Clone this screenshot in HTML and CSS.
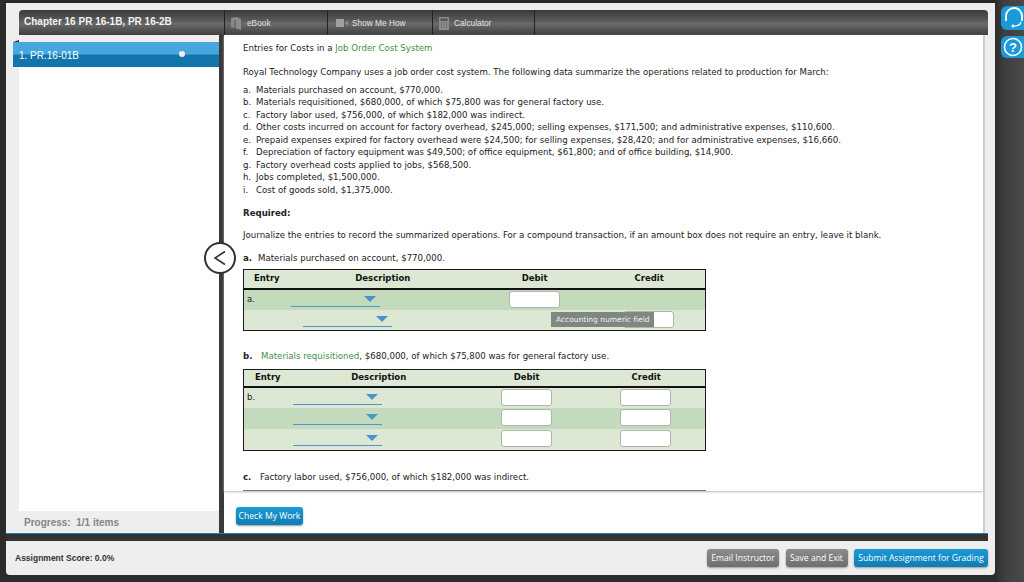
FILE: index.html
```html
<!DOCTYPE html>
<html lang="en">
<head>
<meta charset="utf-8">
<title>Chapter 16 PR 16-1B, PR 16-2B</title>
<link rel="stylesheet" href="styles.css">
</head>
<body>
<div class="shell">
  <div class="window">
    <header class="titlebar">
      <h1 class="chapter">Chapter 16 PR 16-1B, PR 16-2B</h1>
      <nav class="tools">
        <a class="tool tool-book"><svg class="ico" width="10" height="13" viewBox="0 0 10 13"><path d="M0 1 L6 0 L10 2 V13 L4 11 L0 10 Z" fill="#8a8a8a"/><path d="M4 3 V11" stroke="#555" fill="none"/></svg>eBook</a>
        <a class="tool tool-show"><svg class="ico" width="12" height="8" viewBox="0 0 12 8"><rect width="8" height="8" fill="#a0a0a0"/><path d="M9 4 L12 1 V7 Z" fill="#8a8a8a"/></svg>Show Me How</a>
        <a class="tool tool-calc"><svg class="ico" width="10" height="13" viewBox="0 0 10 13"><rect width="10" height="13" fill="#8c8c8c"/><rect x="1.5" y="1.5" width="7" height="2.5" fill="#555"/><path d="M2 6h1M4.500 6h1M7 6h1M2 8h1M4.500 8h1M7 8h1M2 10.500h1M4.500 10.500h1M7 10.500h1" stroke="#555" fill="none"/></svg>Calculator</a>
      </nav>
    </header>
    <div class="main">
      <aside class="sidebar">
        <div class="item"><span>1. PR.16-01B</span><i class="dot"></i></div>
        <div class="list"></div>
        <div class="progress">Progress:&nbsp; 1/1 items</div>
      </aside>
      <section class="content">
        <div class="scroll">
          <p class="title">Entries for Costs in a <span class="green">Job Order Cost System</span></p>
          <p class="intro">Royal Technology Company uses a job order cost system. The following data summarize the operations related to production for March:</p>
          <ol class="facts">
            <li><b>a.</b>Materials purchased on account, $770,000.</li>
            <li><b>b.</b>Materials requisitioned, $680,000, of which $75,800 was for general factory use.</li>
            <li><b>c.</b>Factory labor used, $756,000, of which $182,000 was indirect.</li>
            <li><b>d.</b>Other costs incurred on account for factory overhead, $245,000; selling expenses, $171,500; and administrative expenses, $110,600.</li>
            <li><b>e.</b>Prepaid expenses expired for factory overhead were $24,500; for selling expenses, $28,420; and for administrative expenses, $16,660.</li>
            <li><b>f.</b>Depreciation of factory equipment was $49,500; of office equipment, $61,800; and of office building, $14,900.</li>
            <li><b>g.</b>Factory overhead costs applied to jobs, $568,500.</li>
            <li><b>h.</b>Jobs completed, $1,500,000.</li>
            <li><b>i.</b>Cost of goods sold, $1,375,000.</li>
          </ol>
          <p class="required">Required:</p>
          <p class="journal">Journalize the entries to record the summarized operations. For a compound transaction, if an amount box does not require an entry, leave it blank.</p>
          <p class="part part-a"><b>a.</b>Materials purchased on account, $770,000.</p>
          <table class="entry entry-a">
            <colgroup><col class="ca1"><col class="ca2"><col class="ca3"><col class="ca4"></colgroup>
            <thead><tr><th>Entry</th><th>Description</th><th>Debit</th><th>Credit</th></tr></thead>
            <tbody>
              <tr class="alt"><td class="lbl">a.</td><td><div class="drop"></div></td><td><div class="field"></div></td><td></td></tr>
              <tr><td></td><td><div class="drop drop-in"></div></td><td></td><td class="tipcell"><div class="field"></div><div class="tip">Accounting numeric field</div></td></tr>
            </tbody>
          </table>
          <p class="part part-b"><b>b.</b><span class="green">Materials requisitioned</span>, $680,000, of which $75,800 was for general factory use.</p>
          <table class="entry entry-b">
            <colgroup><col class="cb1"><col class="cb2"><col class="cb3"><col class="cb4"></colgroup>
            <thead><tr><th>Entry</th><th>Description</th><th>Debit</th><th>Credit</th></tr></thead>
            <tbody>
              <tr><td class="lbl">b.</td><td><div class="drop"></div></td><td><div class="field"></div></td><td><div class="field"></div></td></tr>
              <tr class="alt"><td></td><td><div class="drop"></div></td><td><div class="field"></div></td><td><div class="field"></div></td></tr>
              <tr><td></td><td><div class="drop"></div></td><td><div class="field"></div></td><td><div class="field"></div></td></tr>
            </tbody>
          </table>
          <p class="part part-c"><b>c.</b>Factory labor used, $756,000, of which $182,000 was indirect.</p>
          <div class="nexttable"></div>
        </div>
        <div class="actions"><button class="btn btn-blue">Check My Work</button></div>
        <button class="back" aria-label="Back"><svg width="14" height="16" viewBox="0 0 14 16"><path d="M12 1.500 L2 8 L12 14.500" fill="none" stroke="#333" stroke-width="1.600"/></svg></button>
      </section>
    </div>
    <div class="statusline"></div>
    <footer class="footer">
      <span class="score">Assignment Score: 0.0%</span>
      <div class="footer-btns">
        <button class="btn btn-gray">Email Instructor</button>
        <button class="btn btn-gray">Save and Exit</button>
        <button class="btn btn-blue btn-submit">Submit Assignment for Grading</button>
      </div>
    </footer>
  </div>
  <div class="rail">
    <div class="railbtn"><svg width="23" height="24" viewBox="0 0 23 24"><path d="M5 15 V10 A8 8 0 0 1 21 10 V15" fill="none" stroke="#fff" stroke-width="1.800"/><path d="M20 16 Q19 20 13 20" fill="none" stroke="#fff" stroke-width="1.200"/><circle cx="12" cy="20" r="1.500" fill="#fff"/></svg></div>
    <div class="railbtn railbtn-q"><svg width="23" height="22" viewBox="0 0 23 22"><circle cx="12" cy="11" r="8.500" fill="none" stroke="#fff" stroke-width="1.600"/><text x="12" y="15.500" text-anchor="middle" class="qmark">?</text></svg></div>
  </div>
</div>
</body>
</html>
```
FILE: styles.css
```css
* { box-sizing: border-box; }
html, body { margin: 0; height: 582px; overflow: hidden; }
body { background: #2b2b2b; font-family: "Liberation Sans", Arial, sans-serif; }
p, h1, ol { margin: 0; padding: 0; }
.shell { display: flex; height: 582px; padding-top: 3px; }
.window {
  width: 989px; height: 572px; margin-left: 6px; padding-top: 7px;
  background: #eeeeee; display: flex; flex-direction: column;
  border-bottom-left-radius: 4px; border-bottom-right-radius: 4px;
}
.titlebar {
  height: 25px; margin: 0 7px 0 13px; display: flex; flex: none;
  background: linear-gradient(#3a3a3a 0, #5c5c5c 45%, #6a6a6a 55%, #3f3f3f 100%);
  border-radius: 4px 4px 0 0;
}
.chapter { width: 205px; font-size: 10px; font-weight: bold; color: #f2f2f2; padding: 6px 0 0 5px; line-height: 12px; white-space: nowrap; }
.tools { display: flex; }
.tool {
  display: flex; align-items: center; height: 100%; color: #e4e4e4; font-size: 8.3px;
  border-left: 1px solid #222; padding-top: 1px;
}
.tool-book { width: 103px; padding-left: 6px; gap: 6px; }
.tool-show { width: 105px; padding-left: 8px; gap: 4px; }
.tool-calc { width: 102px; padding-left: 6px; gap: 5px; border-right: 0; }
.tools::after { content: ""; border-left: 1px solid #222; }
.ico { flex: none; }

.main { display: flex; height: 498px; flex: none; }
.sidebar { width: 213px; padding: 7px 0 0 7px; display: flex; flex-direction: column; flex: none; }
.item {
  height: 25px; width: 206px; flex: none; display: flex; align-items: center; justify-content: space-between;
  background: linear-gradient(#45a7dd 0, #45a7dd 48%, #1276ac 52%, #1276ac 100%);
  color: #fff; font-size: 10px; padding: 1px 34px 0 6px; position: relative;
}
.item::before { content: ""; position: absolute; left: 0; top: -2px; border-left: 6px solid transparent; border-bottom: 2px solid #333; }
.dot { width: 6px; height: 6px; border-radius: 50%; background: #eee; margin-top: -3px; }
.list { height: 444px; width: 200px; margin-left: 6px; background: #fff; flex: none; }
.progress { font-size: 10px; font-weight: bold; color: #858585; margin: 6px 0 0 11px; line-height: 12px; white-space: nowrap; }

.content {
  width: 766px; flex: none; position: relative; background: #fff;
  border-left: 5px solid #3a3a3a; border-right: 2px solid #cfcfcf;
  display: flex; flex-direction: column; margin-right: 0;
}
.scroll { height: 456px; overflow: hidden; padding: 7px 0 0 19px; font-family: "DejaVu Sans", Verdana, sans-serif; font-size: 8.62px; color: #222; line-height: 12.5px; flex: none; box-shadow: 0 1px 2px #bbb; position: relative; }
.green { color: #3f9147; }
.intro { margin-top: 11px; }
.facts { list-style: none; margin-top: 5.500px; }
.facts b { display: inline-block; font-weight: normal; width: 13px; }
.facts li { height: 12.500px; white-space: nowrap; }
.required { font-weight: bold; margin-top: 10.500px; }
.journal { margin-top: 9.500px; white-space: nowrap; }
.part { white-space: nowrap; }
.part b { display: inline-block; }
.part-a { margin-top: 10.500px; }
.part-a b { width: 15px; }
.part-b { margin-top: 19px; }
.part-b b { width: 18px; }
.part-c { margin-top: 20.500px; }
.part-c b { width: 17px; }

.entry { border-collapse: collapse; table-layout: fixed; width: 463px; border: 1px solid #1c1c1c; background: #dde8d4; }
.part-a + .entry { margin-top: 5px; }
.part-b + .entry { margin-top: 6px; }
.entry th { height: 18px; padding: 0 0 1px 1px; font-weight: bold; color: #111; font-size: 8.500px; border-bottom: 2px solid #111; text-align: center; }
.entry-a th { height: 19px; }
.entry td { height: 21px; padding: 0; vertical-align: top; position: relative; }
.entry .alt { background: #c3dabc; }
.lbl { padding: 3px 0 0 3px !important; font-size: 8.500px; line-height: 12px; }
.ca1 { width: 45px; } .ca2 { width: 187px; } .ca3 { width: 116px; } .ca4 { width: 113px; }
.cb1 { width: 47px; } .cb2 { width: 175px; } .cb3 { width: 120px; } .cb4 { width: 119px; }
.drop { width: 89px; height: 17px; margin: 0 0 0 2px; border-bottom: 1.500px solid #4f93cf; position: relative; }
.drop::after { content: ""; position: absolute; right: 4px; top: 6px; border-left: 6px solid transparent; border-right: 6px solid transparent; border-top: 6px solid #4a94cd; }
.drop-in { margin-left: 14px; }
.field { width: 51px; height: 17px; margin: 1px auto 0; background: #fff; border: 1px solid #aeb5aa; border-radius: 3px; }
.tip { position: absolute; left: -41px; top: 2px; width: 103px; height: 15px; background: #80877f; color: #f2f2f2; font-size: 7.500px; line-height: 15px; text-align: center; white-space: nowrap; }
.nexttable { width: 463px; border-top: 1px solid #777; margin-top: 6px; height: 10px; }

.actions { height: 42px; padding: 16px 0 0 12px; flex: none; }
.btn { font-family: "Open Sans", sans-serif; font-size: 8.600px; color: #fff; border: 0; height: 18px; padding: 0; border-radius: 3px; box-shadow: 0 1px 2px #9a9a9a; white-space: nowrap; display: block; }
.btn-blue { background: linear-gradient(#1a9ad6, #0f7cb4); width: 67px; }
.btn-gray { background: linear-gradient(#8c8c8c, #6e6e6e); }
.footer-btns .btn-gray:nth-child(1) { width: 72px; }
.footer-btns .btn-gray:nth-child(2) { width: 62px; }
.btn-submit { width: 134px; }
.back {
  position: absolute; left: -20px; top: 207px; width: 32px; height: 32px; padding: 0; border-radius: 50%;
  background: #fff; border: 2px solid #333; display: flex; align-items: center; justify-content: center;
}

.statusline { height: 8px; width: 982px; flex: none; background: #333; border-top: 1px solid #1c80b8; }
.footer { flex: 1; display: flex; justify-content: space-between; align-items: center; padding: 0 7px 0 9px; }
.score { font-size: 8.500px; font-weight: bold; color: #333; }
.footer-btns { display: flex; gap: 6.500px; margin-top: 0; }

.rail { flex: 1; background: linear-gradient(90deg, #2b2b2b, #3e3e3e 30%, #4a4a4a); display: flex; flex-direction: column; padding: 3px 0 0 6px; margin-top: -3px; height: 582px; gap: 6px; }
.railbtn { width: 23px; height: 24px; margin-top: 3px; background: #1b9ad8; border-radius: 6px 0 0 6px; overflow: hidden; }
.railbtn-q { height: 22px; margin-top: 0; }
.qmark { fill: #fff; font: bold 13px "Liberation Sans", sans-serif; }
```
